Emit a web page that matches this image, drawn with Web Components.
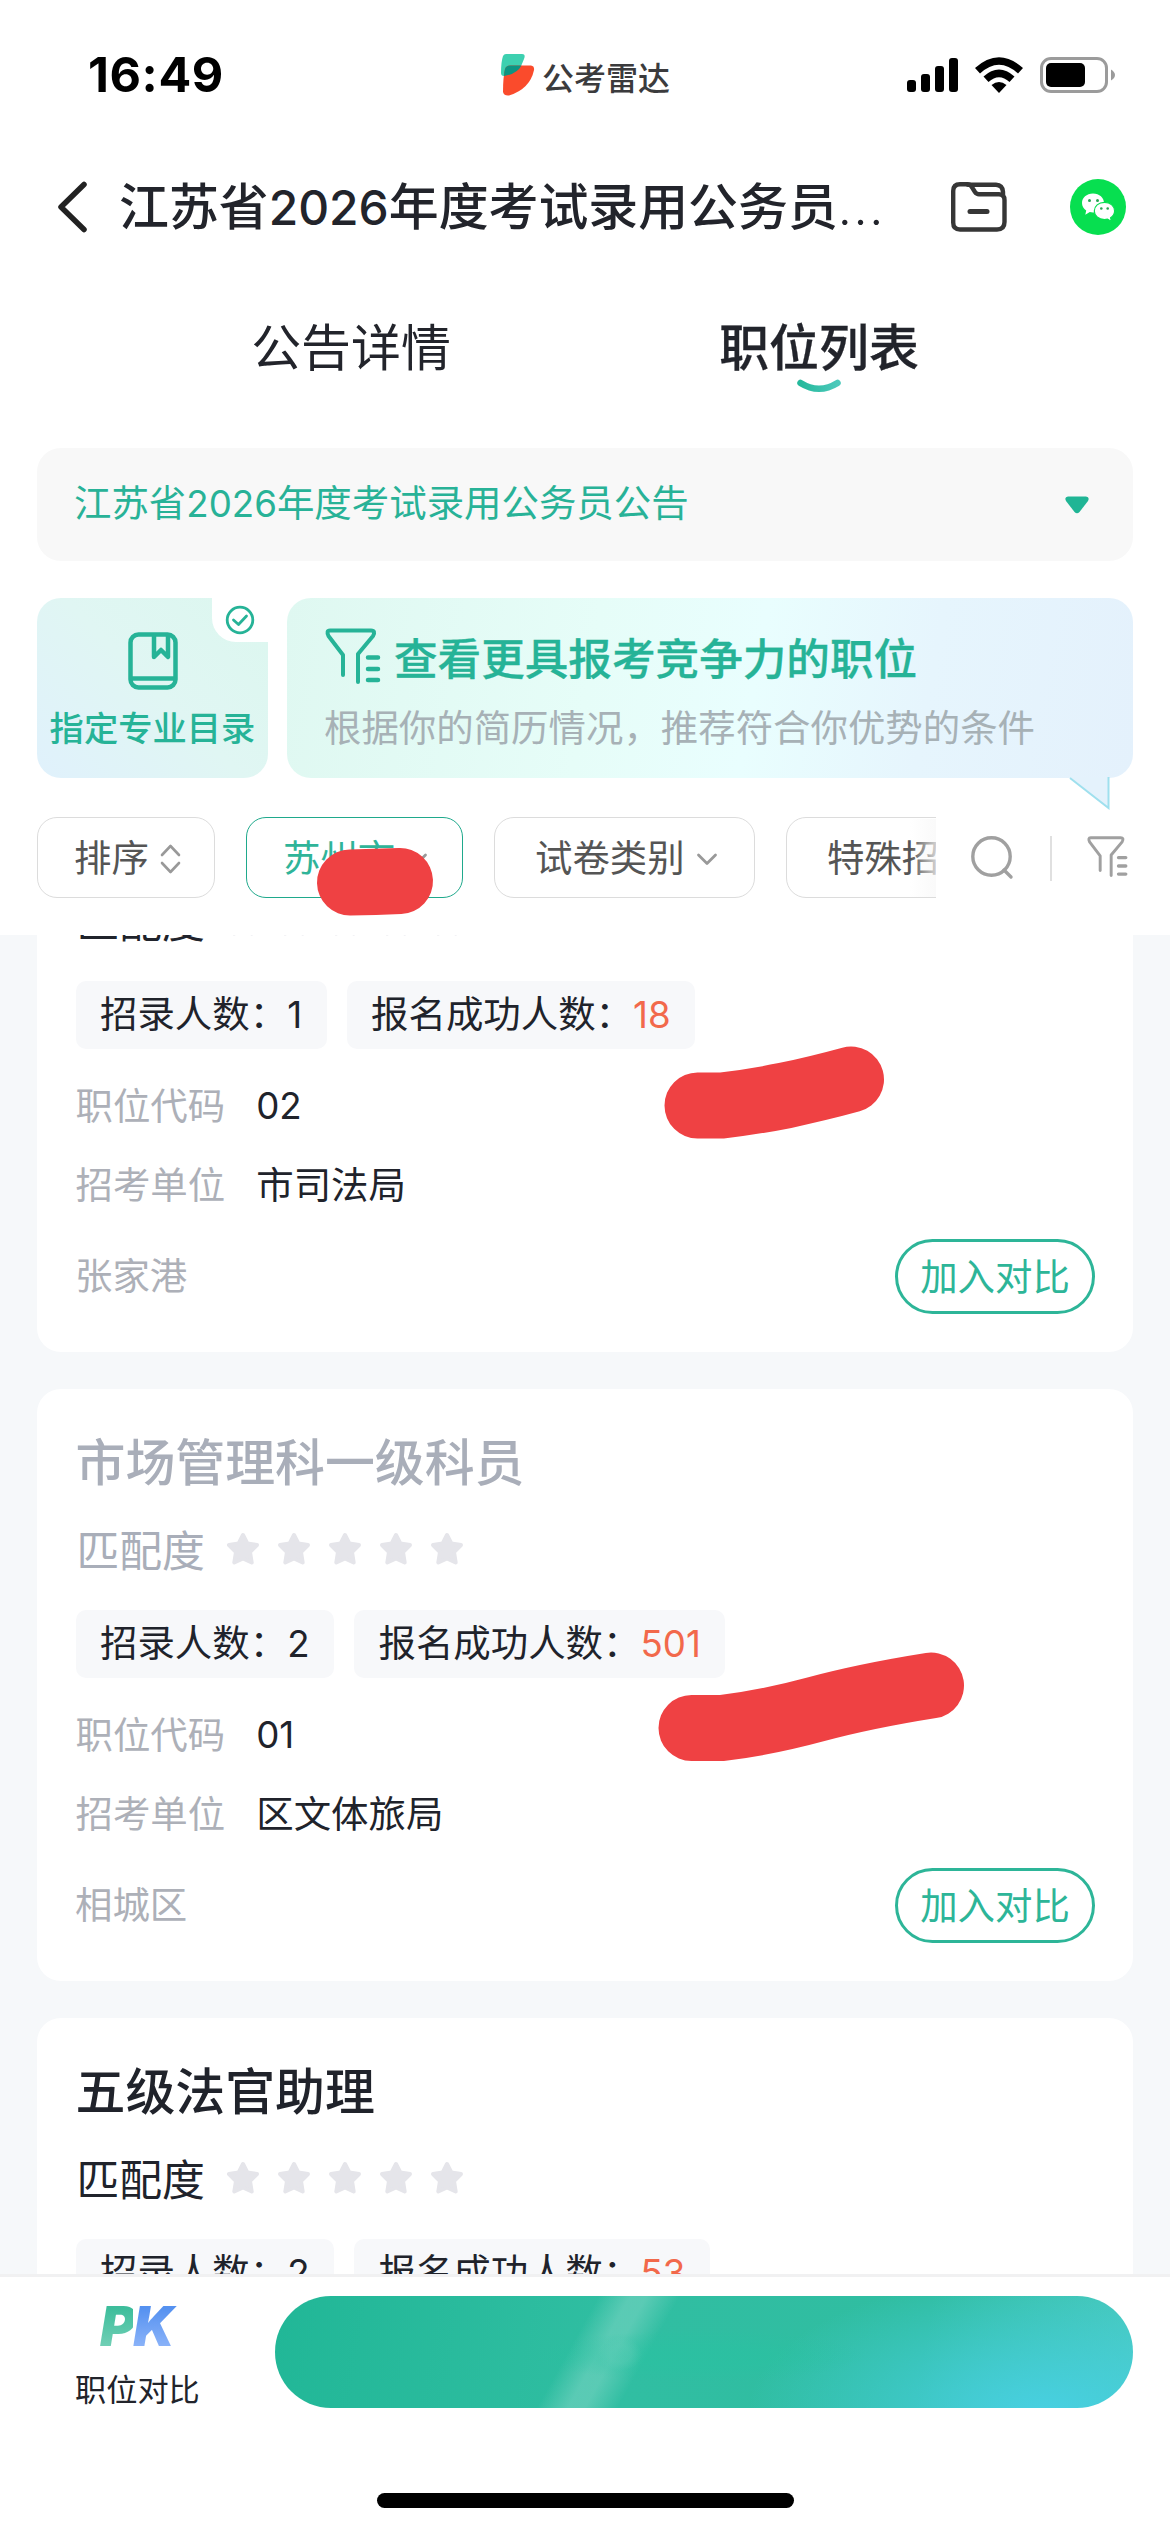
<!DOCTYPE html>
<html lang="zh-CN">
<head>
<meta charset="utf-8">
<meta name="viewport" content="width=1170">
<title>职位列表</title>
<style>
  html, body { margin: 0; padding: 0; background: #fff; }
  body { width: 1170px; height: 2532px; overflow: hidden; font-family: "Noto Sans CJK SC", sans-serif; color: #22262e; }
</style>
</head>
<body>
<job-app></job-app>
<script>
const define = (name, html, setup) => {
  const tpl = document.createElement('template');
  tpl.innerHTML = html.trim();
  customElements.define(name, class extends HTMLElement {
    constructor() {
      super();
      this.attachShadow({ mode: 'open' }).appendChild(tpl.content.cloneNode(true));
    }
    connectedCallback() { if (setup) setup(this, this.shadowRoot); }
  });
};

/* Latin digits */
define('x-num', `
<style>:host{display:inline;font-family:Inter,sans-serif;font-size:.98em;line-height:0}</style><slot></slot>`);

/* Funnel-with-lines icon */
define('funnel-icon', `
<style>:host{display:block;flex:none}svg{display:block;width:100%;height:100%}</style>
<svg viewBox="0 0 56 56" fill="none" stroke="currentColor" stroke-width="4" stroke-linecap="round" stroke-linejoin="round">
<path d="M18 47V27L3.500 8Q1 2.500 5 2.500H46Q51 2.500 48 8L33 26V54"/>
<path d="M43 29.500H53M43 41H53M43 52H53" stroke-width="4.500"/></svg>`);

define('status-bar', `
<style>
:host{display:flex;height:141px;box-sizing:border-box;padding:8px 54px 0 88px;align-items:center;justify-content:space-between}
.time{font:700 48.500px/60px Inter,sans-serif;color:#000;width:352px;letter-spacing:.6px}
.brand{display:flex;align-items:center;gap:7px;font-size:32px;line-height:40px;font-weight:500;color:#3b3b3d;flex:1;padding-left:61px}
.brand svg{width:34px;height:42px}
.brand span{padding-top:2px}
.icons{display:flex;align-items:center;gap:17px}
svg{display:block}
</style>
<div class="time">16:49</div>
<div class="brand">
<svg viewBox="0 0 34 42"><path d="M5 0H21Q25 0 23 5Q19 19 3 22Q0 22 0 19Q0 8 2 2Q3 0 5 0Z" fill="#3dd0b0"/><path d="M9 11.500H30Q33.500 12 33 16Q29 35 8 41.500Q3 42 2 38Q2 24 4 15Q5 11.500 9 11.500Z" fill="#fa4b2c"/><path d="M9 11.500H20.500Q16 20 3 22Q3 18 4 15Q5 11.500 9 11.500Z" fill="#0d9482"/></svg>
<span>公考雷达</span></div>
<div class="icons">
<svg width="51" height="36" viewBox="0 0 51 36"><rect y="23" width="9" height="12" rx="3"/><rect x="14" y="17" width="9" height="18" rx="3"/><rect x="28" y="9" width="9" height="26" rx="3"/><rect x="42" y="1" width="9" height="34" rx="3"/></svg>
<svg width="48" height="36" viewBox="0 0 48 36"><path d="M0 11Q24 -10.500 48 11L43 16.500Q24 -1 5 16.500Z"/><path d="M8.500 19.500Q24 5.500 39.500 19.500L34.500 25Q24 15.500 13.500 25Z"/><path d="M16.500 28Q24 22 31.500 28L24 36Z"/></svg>
<svg width="76" height="36" viewBox="0 0 76 36"><rect x="1.500" y="1.500" width="65" height="33" rx="9.500" fill="none" stroke="#9b9b9b" stroke-width="3"/><rect x="6" y="6" width="39" height="24" rx="5"/><path d="M71 12.500Q75 15 75 18T71 23.500Z" fill="#9b9b9b"/></svg>
</div>`);

define('nav-bar', `
<style>
:host{display:flex;height:132px;align-items:center;box-sizing:border-box;padding:0 44px 0 56px}
svg{display:block;flex:none}
h1{margin:0 0 8px 31px;flex:1;font-size:49.900px;line-height:64px;font-weight:500;color:#22242b;white-space:nowrap}
h1 x-num{font-size:.96em}
.dots{font-family:Inter,sans-serif;font-weight:300;letter-spacing:1.700px;line-height:0}
.chat{margin-left:63px}
</style>
<svg width="32" height="52" viewBox="0 0 32 52"><path d="M28 3.500L5 26L28 48.500" fill="none" stroke="#222" stroke-width="5.500" stroke-linecap="round" stroke-linejoin="round"/></svg>
<h1>江苏省<x-num>2026</x-num>年度考试录用公务员<span class="dots">...</span></h1>
<svg width="56" height="50" viewBox="0 0 56 50" fill="none" stroke="#363636" stroke-width="4.400" stroke-linecap="round" stroke-linejoin="round"><path d="M9 2.200H16.500Q19 2.200 20.500 4.500L24 10Q25.500 12.200 28 12.200H48Q53.500 12.500 53.500 18V40Q53.500 47.500 46 47.500H9Q2.200 47.500 2.200 40.500V9Q2.200 2.200 9 2.200Z"/><path d="M17 2.800H45Q51.500 3 52 10V13"/><path d="M19 29.500H36" stroke-width="5"/></svg>
<svg class="chat" width="56" height="56" viewBox="0 0 56 56"><circle cx="28" cy="28" r="28" fill="#07df50"/><path d="M23 14.500c-6.500 0-11 4.300-11 9.500 0 3.200 1.600 5.800 4.200 7.500l-.9 4.200 4.500-2.600c1 .2 2.100.3 3.200.3 6.500 0 11-4.200 11-9.400s-4.500-9.500-11-9.500z" fill="#fff"/><path d="M34.500 23.300c-6 0-10.200 4-10.200 8.600s4.200 8.600 10.200 8.600c1 0 2-.1 3-.4l3.900 2.300-.8-3.700c2.500-1.600 4-4 4-6.800 0-4.600-4.100-8.600-10.100-8.600z" fill="#fff" stroke="#07df50" stroke-width="1.200"/><g fill="#27a552"><circle cx="19.500" cy="21.500" r="1.500"/><circle cx="27.500" cy="21.500" r="1.500"/><circle cx="31.300" cy="29.500" r="1.300"/><circle cx="37.700" cy="29.500" r="1.300"/></g></svg>`);

define('tab-row', `
<style>
:host{display:flex;height:148px;padding:0 117px}
div{flex:1;display:flex;flex-direction:column;align-items:center;font-size:49.900px;line-height:66px;padding-top:38px;color:#22242b}
.on{font-weight:500;-webkit-text-stroke:.3px currentColor}
svg{display:block;margin-top:2px}
</style>
<div>公告详情</div>
<div class="on">职位列表<svg width="44" height="14" viewBox="0 0 44 14"><defs><linearGradient id="s"><stop stop-color="#25b99c"/><stop offset="1" stop-color="#4cc9bb"/></linearGradient></defs><path d="M3.500 4Q22 15.500 40.500 4" fill="none" stroke="url(#s)" stroke-width="6.500" stroke-linecap="round"/></svg></div>`);

define('notice-select', `
<style>
:host{display:flex;margin:27px 37px 0;height:113px;box-sizing:border-box;background:#f8f8f8;border-radius:24px;align-items:center;justify-content:space-between;padding:0 44px 8px 37px;font-size:37.440px;line-height:56px;color:#28b297}
svg{display:block;margin-top:9px}
</style>
<span><slot></slot></span>
<svg width="24" height="18" viewBox="0 0 24 18"><path d="M3 .5H21Q25 1 23 5L14.500 16Q12 18.500 9.500 16L1 5Q-1 1 3 .5Z" fill="#20b595"/></svg>`);

define('promo-row', `
<style>
:host{display:flex;gap:19px;margin:37px 37px 0;height:180px;color:#26b397}
.dir{position:relative;width:231px;border-radius:24px;background:linear-gradient(45deg,#e0f1fc 0%,#e0f6f3 50%,#dcf7ef 100%);display:flex;flex-direction:column;align-items:center;box-sizing:border-box;padding-top:34px;font-size:34.300px;line-height:50px;font-weight:500}
.dir>svg{display:block;margin-bottom:11px}
.badge{position:absolute;right:0;top:0;width:56px;height:44px;background:#fff;border-bottom-left-radius:24px;display:flex;align-items:center;justify-content:center;}
.badge svg{display:block}
.adv{position:relative;flex:1;border-radius:24px;box-sizing:border-box;padding:25px 0 0 38px;background:linear-gradient(100deg,#dff8f1 0%,#e6fdf8 36%,#e9fefe 55%,#e6f5fd 75%,#e4f1fc 100%)}
.h{display:flex;align-items:center;gap:13px;height:66px;font-size:43.600px;line-height:60px;font-weight:500;-webkit-text-stroke:.3px currentColor}
.h span{margin-top:-1px}
.h funnel-icon{width:56px;height:56px}
p{margin:10px 0 0;font-size:37.440px;line-height:54px;color:#a7b1b6;margin-left:-1px}
.tail{position:absolute;right:22px;top:179px;display:block}
</style>
<div class="dir"><svg width="50" height="58" viewBox="0 0 50 58" fill="none" stroke="currentColor" stroke-width="4.500" stroke-linejoin="round"><rect x="2.500" y="2.500" width="45" height="53" rx="8"/><path d="M3 46.500H47"/><path d="M26 3V25L33 18L40 25V3"/></svg>指定专业目录
<div class="badge"><svg width="30" height="30" viewBox="0 0 30 30" fill="none" stroke="currentColor" stroke-width="2.800" stroke-linecap="round" stroke-linejoin="round"><circle cx="15" cy="15" r="12.800"/><path d="M8.500 15L13.500 19.500L21.500 11"/></svg></div></div>
<div class="adv"><div class="h"><funnel-icon></funnel-icon><span>查看更具报考竞争力的职位</span></div>
<p>根据你的简历情况，推荐符合你优势的条件</p>
<svg class="tail" width="42" height="33" viewBox="0 0 42 33"><path d="M1 0L39.500 31V0Z" fill="#e4f2fc"/><path d="M1 1L39.500 31V0" fill="none" stroke="#9fe0ee" stroke-width="2"/></svg></div>`);

define('filter-pill', `
<style>
:host{display:flex;flex:none;align-items:center;height:81px;box-sizing:border-box;border:1px solid #dcdcdc;border-radius:20px;font-size:37.440px;line-height:54px;color:#555;padding:0 0 3px 36px;background:#fff;white-space:nowrap}
:host([on]){border-color:#1fa98c;color:#2fb499}
svg{display:block;margin-left:11px;margin-top:5px}
.b{display:none}
:host([sort]) .b{display:block}
:host([sort]) .a{display:none}
</style><slot></slot>
<svg class="a" width="22" height="14" viewBox="0 0 22 14" fill="none" stroke="#999" stroke-width="2.800" stroke-linecap="round" stroke-linejoin="round"><path d="M2.500 3L11 11.500L19.500 3"/></svg>
<svg class="b" width="21" height="30" viewBox="0 0 21 30" fill="none" stroke="#999" stroke-width="2.600" stroke-linecap="round" stroke-linejoin="round"><path d="M2 11L10.500 2L19 11M2 19L10.500 28L19 19"/></svg>`);

define('filter-row', `
<style>
:host{display:flex;margin:39px 0 0 37px;height:119px;align-items:flex-start}
.scroll{width:899px;height:82px;display:flex;gap:31px;overflow:hidden;position:relative}
.fade{position:absolute;right:0;top:2px;width:26px;height:78px;background:linear-gradient(90deg,#fff0,#f8f8f8c0)}
.tools{display:flex;align-items:center;height:82px;padding-left:35px;color:#a0a0a0}
svg{display:block;margin-top:-3px}
i{width:2px;height:45px;background:#e0e0e0;margin:0 34px 0 36px}
funnel-icon{width:43px;height:41px;margin-top:-3px}
</style>
<div class="scroll">
<filter-pill sort style="width:178px">排序</filter-pill>
<filter-pill on style="width:217px">苏州市</filter-pill>
<filter-pill style="width:261px;padding-left:40px">试卷类别</filter-pill>
<filter-pill style="width:261px;padding-left:40px">特殊招</filter-pill>
<div class="fade"></div></div>
<div class="tools">
<svg width="43" height="46" viewBox="0 0 43 46" fill="none" stroke="currentColor" stroke-width="3.400" stroke-linecap="round"><circle cx="20.500" cy="22.500" r="18.700"/><path d="M33 36L40 43"/></svg>
<i></i><funnel-icon></funnel-icon></div>`);

define('star-row', `
<style>:host{display:flex;gap:17px}svg{display:block;width:34px;height:34px}</style>`, (el, root) => {
  for (let i = 0; i < 5; i++) {
    const t = document.createElement('template');
    t.innerHTML = '<svg viewBox="0 0 34 34"><path d="M17 3L21.300 11.500L31 13L24 20L25.700 30.500L17 26.500L8.300 30.500L10 20L3 13L12.700 11.500Z" fill="#e5e5ea" stroke="#e5e5ea" stroke-width="4" stroke-linejoin="round"/></svg>';
    root.appendChild(t.content);
  }
});

define('job-card', `
<style>
:host{display:block;flex:none;box-sizing:border-box;height:592px;margin:0 37px 37px;padding:34px 38px 0 38.500px;background:#fff;border-radius:24px;color:#20232b}
h2{margin:0;height:72px;font-size:49.900px;line-height:72px;font-weight:500;white-space:nowrap}
.m{display:flex;align-items:center;height:60px;margin-top:23px;font-size:42.800px;line-height:60px;padding-left:1px}
.m star-row{margin-left:21.500px;margin-top:2px}
:host([dim]) h2,:host([dim]) .m{color:#a9aeb9}
.chips{display:flex;gap:20px;margin-top:32px}
.chips div{height:68px;box-sizing:border-box;padding:0 24.500px;background:#f7f8fa;border-radius:10px;font-size:37.440px;line-height:62px;white-space:nowrap}
.chips b{font-weight:400;color:#f2694b}
.r{display:flex;gap:31px;height:60px;margin-top:19px;font-size:37.440px;line-height:60px}
.r.first{margin-top:25px}
.r span,.loc{color:#adb0b8}
.c{padding-top:1px}
.f{display:flex;align-items:center;justify-content:space-between;height:75px;margin-top:26px;font-size:37.440px;line-height:56px}
.loc{padding-bottom:5px;margin-left:-.5px}
.btn{box-sizing:border-box;width:200px;height:75px;border:3px solid #2db598;border-radius:38px;color:#2db598;text-align:center;line-height:66px}
</style>
<h2><slot name="title"></slot></h2>
<div class="m">匹配度<star-row></star-row></div>
<div class="chips"><div>招录人数：<x-num class="n"></x-num></div><div>报名成功人数：<b><x-num class="s"></x-num></b></div></div>
<div class="r first"><span>职位代码</span><x-num class="c"></x-num></div>
<div class="r"><span>招考单位</span><slot name="unit"></slot></div>
<div class="f"><div class="loc"><slot name="place"></slot></div><div class="btn">加入对比</div></div>`, (el, root) => {
  root.querySelector('.n').textContent = el.getAttribute('need');
  root.querySelector('.s').textContent = el.getAttribute('signed');
  const c = root.querySelector('.c');
  c.textContent = el.getAttribute('code');
  c.style.lineHeight = '61px';
});

define('compare-bar', `
<style>
:host{display:flex;flex:none;height:258px;box-sizing:border-box;border-top:3px solid #f1f1f2;padding:19px 37px 0 75px;position:relative;background:#fff}
.pk{width:200px;font-size:31.200px;line-height:44px;color:#22242b}
.logo{font:italic 900 54.500px/60px Inter,sans-serif;letter-spacing:-2.500px;padding-left:25px;height:70px;display:flex;align-items:flex-start}
.logo span{background:linear-gradient(#3dbd9b 20%,#72d0b6 85%);-webkit-background-clip:text;background-clip:text;color:transparent}
.logo span+span{background-image:linear-gradient(#5591f0 20%,#8bb3f9 85%);padding-right:7px}
.go{flex:1;height:112px;border-radius:56px;background:radial-gradient(ellipse 22px 17px at 345px 58px,#68cfbb50 50%,#68cfbb00 100%),radial-gradient(ellipse 165px 26px at 425px 60px,#26c3a160 40%,#26c3a100 100%),linear-gradient(119deg,#6bd0bd00 35.200%,#68cfbbc0 38.600%,#68cfbbc0 40.400%,#6bd0bd00 44%),radial-gradient(ellipse 300px 140px at 90% 105%,#48d0e2 0%,#48d0e200 100%),linear-gradient(100deg,#21b797 0%,#30bea2 40%,#30bda1 75%,#48c9bd 100%)}
.home{position:absolute;left:377px;bottom:24px;width:417px;height:15px;border-radius:8px;background:#000}
</style>
<div class="pk"><div class="logo"><span>P</span><span>K</span></div>职位对比</div>
<div class="go"></div><div class="home"></div>`);

/* Freehand marker strokes laid over the page */
define('marker-layer', `
<style>:host{position:absolute;left:0;top:0;width:1170px;height:2532px;pointer-events:none}svg{display:block}</style>
<svg width="1170" height="2532" viewBox="0 0 1170 2532" fill="none" stroke="#ef4143" stroke-linecap="round" stroke-linejoin="round">
<path stroke-width="66" d="M350 882.500Q375 882 400 881"/>
<path stroke-width="66" d="M697.500 1105.500H722Q752 1102 785 1095.500Q820 1088 851 1079.500"/>
<path stroke-width="66" d="M691.500 1728H722Q765 1723 815 1709.500Q865 1696 931 1685.500"/></svg>`);

define('job-app', `
<style>
:host{display:flex;flex-direction:column;width:1170px;height:2532px;position:relative;overflow:hidden;background:#fff}
header{height:935px;flex:none}
main{flex:1;min-height:0;overflow:hidden;background:#f6f8fa;display:flex;flex-direction:column}
main job-card:first-child{margin-top:-175px}
</style>
<header>
<status-bar></status-bar><nav-bar></nav-bar><tab-row></tab-row>
<notice-select>江苏省<x-num>2026</x-num>年度考试录用公务员公告</notice-select>
<promo-row></promo-row><filter-row></filter-row>
</header>
<main>
<job-card need="1" signed="18" code="02"><span slot="unit">市司法局</span><span slot="place">张家港</span></job-card>
<job-card dim need="2" signed="501" code="01"><span slot="title">市场管理科一级科员</span><span slot="unit">区文体旅局</span><span slot="place">相城区</span></job-card>
<job-card need="2" signed="53"><span slot="title">五级法官助理</span></job-card>
</main>
<compare-bar></compare-bar>
<marker-layer></marker-layer>`);
</script>
</body>
</html>
